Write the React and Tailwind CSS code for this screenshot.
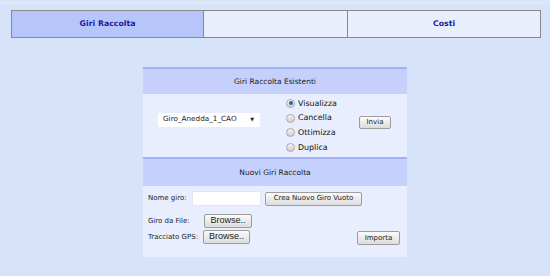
import React, { useState } from 'react';

const font = "font-['DejaVu_Sans',sans-serif]";

const Radio = ({ label, checked, onClick }) => (
    <div className="flex items-center h-[14.7px] cursor-pointer" onClick={onClick}>
        <span className="w-[9px] h-[9px] rounded-full border border-[#a9a9a9] bg-gradient-to-b from-[#f4f4f4] to-[#cfcfcf] flex items-center justify-center">
            {checked && <span className="w-[4px] h-[4px] rounded-full bg-[#2c5fb8]" />}
        </span>
        <span className="ml-[3px] text-[7.9px] text-[#111]">{label}</span>
    </div>
);

const Button = ({ children, className }) => (
    <button className={"flex items-center justify-center rounded-[2px] border border-[#9d9d9d] bg-gradient-to-b from-[#fbfbfb] to-[#dcdcdc] text-[#222] " + className}>
        {children}
    </button>
);

const App = () => {
    const [action, setAction] = useState('Visualizza');

    return (
        <div className={"w-[550px] h-[276px] overflow-hidden bg-[#d6e3f9] " + font}>
            <div className="h-[4px] border-b border-[#e3ebfa] bg-[#dbe6f9]" />

            {/* tabs */}
            <div className="ml-[11px] mt-[6px] w-[530px] h-[28px] flex border border-[#8a8a8a] text-[7.8px] font-bold text-[#1a1aa0]">
                <div className="w-[192px] bg-[#b7c6fa] border-r border-[#8a8a8a] flex items-center justify-center">Giri Raccolta</div>
                <div className="w-[144px] bg-[#e9eefd] border-r border-[#8a8a8a]" />
                <div className="flex-1 bg-[#e9eefd] flex items-center justify-center">Costi</div>
            </div>

            {/* panel */}
            <div className="ml-[143px] mt-[29px] w-[264px] text-[#222]">
                <div className="h-[27px] border-t-2 border-[#a3b1f6] bg-[#c5d0fc] flex items-center justify-center text-[7.5px]">
                    Giri Raccolta Esistenti
                </div>
                <div className="h-[63px] bg-[#e8eefd] flex items-center">
                    <div className="ml-[15px] mb-[12px] w-[102px] h-[14px] bg-white flex items-center justify-between pl-[5px] pr-[6px] text-[7.25px]">
                        <span>Giro_Anedda_1_CAO</span>
                        <span className="text-[5px]">▼</span>
                    </div>
                    <div className="ml-[26px] w-[73px] flex flex-col">
                        {['Visualizza', 'Cancella', 'Ottimizza', 'Duplica'].map(a => (
                            <Radio key={a} label={a} checked={action === a} onClick={() => setAction(a)} />
                        ))}
                    </div>
                    <Button className="mb-[6px] w-[32px] h-[13px] text-[7px]">Invia</Button>
                </div>

                <div className="h-[29px] border-t-2 border-[#a3b1f6] bg-[#c5d0fc] flex items-center justify-center text-[7.5px]">
                    Nuovi Giri Raccolta
                </div>
                <div className="h-[71px] bg-[#e8eefd] pl-[5px] pr-[7px] pt-[5px] text-[7px]">
                    <div className="flex items-center h-[15px]">
                        <span className="w-[44px]">Nome giro:</span>
                        <input className="w-[69px] h-[15px] bg-white border border-[#e6e6e6] outline-none" />
                        <Button className="ml-[4px] w-[97px] h-[14px] text-[7px]">Crea Nuovo Giro Vuoto</Button>
                    </div>
                    <div className="flex items-center h-[14px] mt-[8px]">
                        <span className="w-[56px]">Giro da File:</span>
                        <Button className="w-[48px] h-[14px] text-[9px] font-['Liberation_Sans',sans-serif]">Browse..</Button>
                    </div>
                    <div className="flex items-center h-[14px] mt-[2px]">
                        <span className="w-[55px]">Tracciato GPS:</span>
                        <Button className="w-[47px] h-[14px] text-[9px] font-['Liberation_Sans',sans-serif]">Browse..</Button>
                        <div className="flex-1" />
                        <Button className="w-[43px] h-[14px] text-[7px] mt-[2px]">Importa</Button>
                    </div>
                </div>
            </div>
        </div>
    );
};

export default App;
